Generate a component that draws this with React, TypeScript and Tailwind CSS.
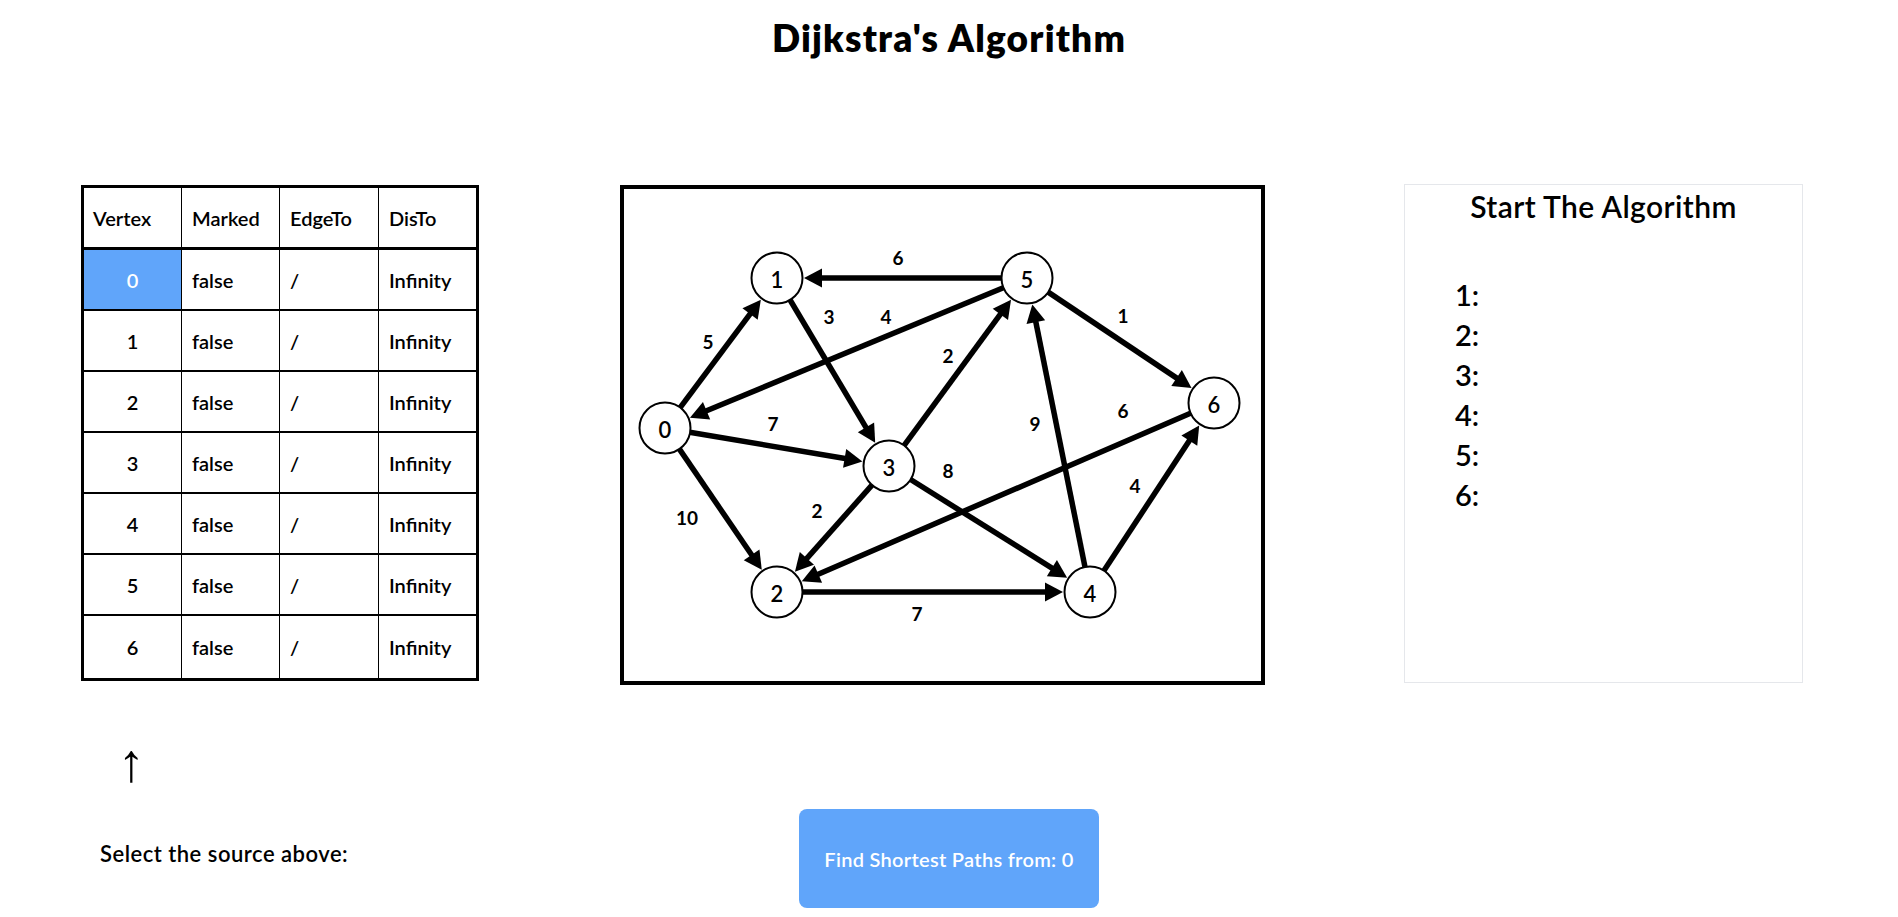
const nodes: Record<number, [number, number]> = {
  0: [41, 239],
  1: [153, 89],
  2: [153, 403],
  3: [265, 277],
  4: [466, 403],
  5: [403, 89],
  6: [590, 214],
};

// from, to, weight, label x, label y
const edges: [number, number, string, number, number][] = [
  [0, 1, "5", 84, 152],
  [5, 1, "6", 274, 68],
  [1, 3, "3", 205, 127],
  [5, 0, "4", 262, 127],
  [3, 5, "2", 324, 166],
  [5, 6, "1", 499, 126],
  [0, 3, "7", 149, 234],
  [0, 2, "10", 63, 328],
  [3, 2, "2", 193, 321],
  [6, 2, "6", 499, 221],
  [3, 4, "8", 324, 281],
  [4, 5, "9", 411, 234],
  [4, 6, "4", 511, 296],
  [2, 4, "7", 293, 424],
];

const R = 27;
const HEAD = 18;
const HALF = 9.5;

function Edge({ from, to }: { from: number; to: number }) {
  const [ax, ay] = nodes[from];
  const [bx, by] = nodes[to];
  const len = Math.hypot(bx - ax, by - ay);
  const ux = (bx - ax) / len;
  const uy = (by - ay) / len;
  const sx = ax + ux * (R - 2);
  const sy = ay + uy * (R - 2);
  const tx = bx - ux * R;
  const ty = by - uy * R;
  const ex = tx - ux * (HEAD - 2);
  const ey = ty - uy * (HEAD - 2);
  const bxx = tx - ux * HEAD;
  const byy = ty - uy * HEAD;
  const pts = `${tx},${ty} ${bxx - uy * HALF},${byy + ux * HALF} ${bxx + uy * HALF},${byy - ux * HALF}`;
  return (
    <g>
      <line x1={sx} y1={sy} x2={ex} y2={ey} stroke="black" strokeWidth={5.5} />
      <polygon points={pts} fill="black" />
    </g>
  );
}

function Graph() {
  return (
    <svg width="637" height="492" viewBox="0 0 637 492" className="block">
      {edges.map(([f, t], i) => (
        <Edge key={i} from={f} to={t} />
      ))}
      {edges.map(([, , w, x, y], i) => (
        <text
          key={i}
          x={x}
          y={y}
          textAnchor="middle"
          dominantBaseline="central"
          fontFamily="Lato, sans-serif"
          fontWeight={700}
          fontSize={19}
        >
          {w}
        </text>
      ))}
      {Object.entries(nodes).map(([id, [x, y]]) => (
        <g key={id}>
          <circle cx={x} cy={y} r={25.5} fill="white" stroke="black" strokeWidth={2} />
          <text
            x={x}
            y={y + 1}
            textAnchor="middle"
            dominantBaseline="central"
            fontFamily="Lato, sans-serif"
            fontWeight={600}
            fontSize={22}
          >
            {id}
          </text>
        </g>
      ))}
    </svg>
  );
}

function VertexTable() {
  const rows = [0, 1, 2, 3, 4, 5, 6];
  return (
    <div className="w-[398px] mt-px border-[3px] border-black text-[20px] font-semibold text-black">
      <div className="grid grid-cols-[98px_98px_99px_97px] h-[62px] border-b-[3px] border-black">
        <div className="border-r border-black flex items-center pl-[9px]">Vertex</div>
        <div className="border-r border-black flex items-center pl-[10px]">Marked</div>
        <div className="border-r border-black flex items-center pl-[10px]">EdgeTo</div>
        <div className="flex items-center pl-[10px]">DisTo</div>
      </div>
      {rows.map((v) => (
        <div
          key={v}
          className={
            v === 6
              ? "grid grid-cols-[98px_98px_99px_97px] h-[62px]"
              : "grid grid-cols-[98px_98px_99px_97px] h-[61px] border-b-2 border-black"
          }
        >
          <div
            className={
              v === 0
                ? "border-r border-black flex items-center justify-center bg-[#60a5fa] text-white"
                : "border-r border-black flex items-center justify-center"
            }
          >
            {v}
          </div>
          <div className="border-r border-black flex items-center pl-[10px]">false</div>
          <div className="border-r border-black flex items-center pl-[10px]">/</div>
          <div className="flex items-center pl-[10px]">Infinity</div>
        </div>
      ))}
    </div>
  );
}

export default function App() {
  return (
    <div className="w-[1898px] min-h-[917px] bg-white text-black font-['Lato',sans-serif]">
      <h1 className="pt-[17px] text-center text-[37px] leading-[42px] font-extrabold tracking-[1.2px]">
        Dijkstra's Algorithm
      </h1>

      <div className="flex items-start mt-[125px] pl-[81px]">
        <VertexTable />
        <div className="ml-[141px] mt-px w-[645px] h-[500px] border-4 border-black">
          <Graph />
        </div>
        <div className="ml-[139px] w-[399px] h-[499px] border border-[#e5e7eb]">
          <h2 className="pt-[3px] text-center text-[30px] leading-[36px] font-semibold tracking-[0.4px]">
            Start The Algorithm
          </h2>
          <ul className="mt-[51px] pl-[50px] text-[29px] leading-[40px] font-semibold">
            {[1, 2, 3, 4, 5, 6].map((n) => (
              <li key={n}>{n}:</li>
            ))}
          </ul>
        </div>
      </div>

      <div className="grid grid-cols-3">
        <div className="flex flex-col">
          <div className="mt-[52px] pl-[118px] h-[50px] text-[54px] leading-[50px] font-['Liberation_Sans',sans-serif]">
            ↑
          </div>
          <p className="mt-[54px] pl-[100px] text-[22px] leading-[26px] font-semibold tracking-[0.5px]">
            Select the source above:
          </p>
        </div>
        <div className="flex justify-center">
          <button className="mt-[124px] w-[300px] h-[99px] rounded-lg bg-[#60a5fa] text-white text-[20px] font-semibold tracking-[0.3px]">
            Find Shortest Paths from: 0
          </button>
        </div>
        <div />
      </div>
    </div>
  );
}
